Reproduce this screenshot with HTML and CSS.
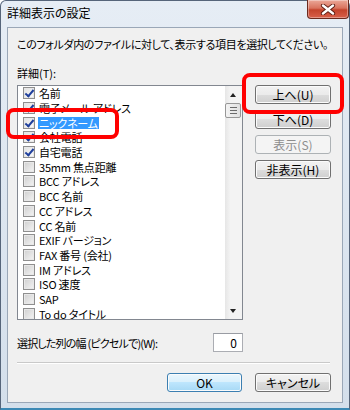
FILE: index.html
```html
<!DOCTYPE html>
<html lang="ja">

<head>
    <meta charset="UTF-8">
    <meta name="viewport" content="width=device-width, initial-scale=1.0">
    <title>詳細表示の設定</title>
    <link rel="stylesheet" href="styles.css">
</head>

<body>
    <div class="window">
        <div class="titlebar">
            <span class="title">詳細表示の設定</span>
            <div class="close">
                <svg width="16" height="11" viewBox="0 0 16 11">
                    <path d="M3 1.5 L13 9.5 M13 1.5 L3 9.5" stroke="#5a1a10" stroke-width="4.2" stroke-linecap="round" />
                    <path d="M3 1.5 L13 9.5 M13 1.5 L3 9.5" stroke="#fff" stroke-width="2.4" stroke-linecap="round" />
                </svg>
            </div>
        </div>

        <div class="client">
            <p class="intro">このフォルダ内のファイルに対して、表示する項目を選択してください。</p>
            <div class="label">詳細(T):</div>

            <div class="main">
                <div class="listbox">
                    <ul class="items">
                        <li><span class="cb on"></span><span class="name">名前</span></li>
                        <li><span class="cb on"></span><span class="name">電子メール アドレス</span></li>
                        <li><span class="cb on"></span><span class="name selected">ニックネーム</span></li>
                        <li><span class="cb on"></span><span class="name">会社電話</span></li>
                        <li><span class="cb on"></span><span class="name">自宅電話</span></li>
                        <li><span class="cb"></span><span class="name">35mm 焦点距離</span></li>
                        <li><span class="cb"></span><span class="name">BCC アドレス</span></li>
                        <li><span class="cb"></span><span class="name">BCC 名前</span></li>
                        <li><span class="cb"></span><span class="name">CC アドレス</span></li>
                        <li><span class="cb"></span><span class="name">CC 名前</span></li>
                        <li><span class="cb"></span><span class="name">EXIF バージョン</span></li>
                        <li><span class="cb"></span><span class="name">FAX 番号 (会社)</span></li>
                        <li><span class="cb"></span><span class="name">IM アドレス</span></li>
                        <li><span class="cb"></span><span class="name">ISO 速度</span></li>
                        <li><span class="cb"></span><span class="name">SAP</span></li>
                        <li><span class="cb"></span><span class="name">To do タイトル</span></li>
                    </ul>
                    <div class="scrollbar">
                        <div class="arrow up"></div>
                        <div class="thumb"><i></i><i></i><i></i></div>
                        <div class="track"></div>
                        <div class="arrow down"></div>
                    </div>
                </div>

                <div class="side">
                    <button class="btn">上へ(U)</button>
                    <button class="btn">下へ(D)</button>
                    <button class="btn" disabled>表示(S)</button>
                    <button class="btn">非表示(H)</button>
                </div>
            </div>

            <div class="width-row">
                <span class="width-label">選択した列の幅 (ピクセルで)(W):</span>
                <input class="num" type="text" value="0">
            </div>

            <div class="sep"></div>

            <div class="footer">
                <button class="btn ok">OK</button>
                <button class="btn cancel">キャンセル</button>
            </div>
        </div>

        <!-- 赤い囲み -->
        <div class="mark mark-item"></div>
        <div class="mark mark-up"></div>
    </div>
</body>

</html>
```

FILE: styles.css
```css
* {
    box-sizing: border-box;
    margin: 0;
    padding: 0;
}

body {
    width: 350px;
    height: 410px;
    font-family: "Noto Sans CJK JP", sans-serif;
    font-size: 11px;
    font-feature-settings: "palt";
    color: #000;
    background: #fff;
}

.window {
    position: relative;
    width: 350px;
    height: 410px;
    display: flex;
    flex-direction: column;
    padding: 0 6px 5px 6px;
    background: linear-gradient(#e6edf5, #d4dfeb);
    border: 1px solid #56657a;
    border-bottom: 2px solid #3c89b5;
    border-radius: 6px 6px 0 0;
}

.titlebar {
    height: 26px;
    display: flex;
    justify-content: space-between;
    align-items: flex-start;
}

.title {
    padding-top: 4px;
    line-height: 16px;
    font-size: 12px;
}

.close {
    width: 42px;
    height: 19px;
    margin-top: -1px;
    margin-right: -6px;
    display: flex;
    align-items: center;
    justify-content: center;
    border: 1px solid #6b2a1e;
    border-top: 0;
    border-radius: 0 0 4px 4px;
    background: linear-gradient(#eba898 0%, #d9735e 45%, #c4432c 55%, #d8604a 100%);
    box-shadow: inset 0 0 0 1px rgba(255, 255, 255, 0.35);
}

.client {
    flex: 1;
    background: #f0f0f0;
    border: 1px solid #9aa7b7;
    padding: 8px 11px 0 9px;
}

.intro {
    line-height: 16px;
    white-space: nowrap;
    letter-spacing: -0.35px;
}

.label {
    margin-top: 13px;
    line-height: 16px;
}

.main {
    margin-top: 4px;
    display: flex;
    gap: 12px;
}

/* リストボックス */
.listbox {
    width: 226px;
    height: 235px;
    border: 1px solid #828790;
    background: #fff;
    display: flex;
}

.items {
    flex: 1;
    list-style: none;
    overflow: hidden;
}

.items li {
    height: 14.7px;
    display: flex;
    align-items: center;
    padding-left: 5px;
    white-space: nowrap;
}

.cb {
    width: 12px;
    height: 12px;
    flex: none;
    border: 1px solid #8f8f8f;
    background: linear-gradient(135deg, #cfcfcf, #f4f4f4);
    box-shadow: inset 0 0 0 1px #e8e8e8;
    position: relative;
}

.cb.on {
    background: linear-gradient(135deg, #e2e2e2, #fbfbfb);
}

.cb.on::after {
    content: '';
    position: absolute;
    left: 3px;
    top: 0px;
    width: 3px;
    height: 7px;
    border: solid #1f3f9c;
    border-width: 0 2px 2px 0;
    transform: rotate(40deg);
}

.name {
    margin-left: 3px;
    padding: 0 1px;
    line-height: 12px;
    letter-spacing: -0.2px;
}

.name.selected {
    background: #3399ff;
    color: #fff;
}

.scrollbar {
    width: 17px;
    display: flex;
    flex-direction: column;
    background: linear-gradient(90deg, #e6e6e6, #f3f3f3 30%, #f3f3f3);
}

.arrow {
    height: 17px;
    position: relative;
}

.arrow::after {
    content: '';
    position: absolute;
    left: 5px;
    border-left: 3.5px solid transparent;
    border-right: 3.5px solid transparent;
}

.arrow.up::after {
    top: 7px;
    border-bottom: 4px solid #222;
}

.arrow.down::after {
    top: 7px;
    border-top: 4px solid #222;
}

.thumb {
    height: 15px;
    margin: 0 1px 0 0;
    border: 1px solid #979797;
    border-radius: 2px;
    background: linear-gradient(90deg, #f3f3f3, #e0e0e0);
    display: flex;
    flex-direction: column;
    justify-content: center;
    align-items: center;
    gap: 2px;
}

.thumb i {
    display: block;
    width: 7px;
    height: 1px;
    background: #6a6a6a;
}

.track {
    flex: 1;
}

/* ボタン */
.side {
    width: 76px;
    display: flex;
    flex-direction: column;
    gap: 6px;
}

.btn {
    height: 19px;
    border: 1px solid #707070;
    border-radius: 3px;
    background: linear-gradient(#f2f2f2 0%, #ebebeb 50%, #dddddd 50%, #cfcfcf 100%);
    box-shadow: inset 0 0 0 1px #fbfbfb;
    font-family: inherit;
    font-size: 12px;
    font-feature-settings: "palt";
    line-height: 15px;
    color: #000;
}

.btn:disabled {
    border-color: #adb2b5;
    background: #f4f4f4;
    box-shadow: none;
    color: #8d8d8d;
}

.width-row {
    width: 226px;
    margin-top: 13px;
    display: flex;
    justify-content: space-between;
    align-items: center;
    line-height: 16px;
}

.width-label {
    letter-spacing: -0.8px;
}

.num {
    width: 30px;
    height: 19px;
    border: 1px solid #abadb3;
    border-top-color: #999ca3;
    background: #fff;
    text-align: right;
    padding-right: 5px;
    font-family: inherit;
    font-size: 12px;
}

.sep {
    width: 313px;
    margin-top: 10px;
    border-top: 1px solid #c9c9c9;
    border-bottom: 1px solid #fff;
}

.footer {
    margin-top: 9px;
    display: flex;
    justify-content: flex-end;
    gap: 13px;
}

.footer .ok {
    width: 75px;
    border-color: #3c7fb1;
    background: linear-gradient(#eaf6fd 0%, #d9f0fc 50%, #bee6fd 50%, #a7d9f5 100%);
}

.footer .cancel {
    width: 76px;
}

/* 赤い囲み */
.mark {
    position: absolute;
    border: 4px solid #f00;
    border-radius: 8px;
}

.mark-item {
    left: 5px;
    top: 107px;
    width: 113px;
    height: 31px;
}

.mark-up {
    left: 241px;
    top: 72px;
    width: 102px;
    height: 41px;
}
```
